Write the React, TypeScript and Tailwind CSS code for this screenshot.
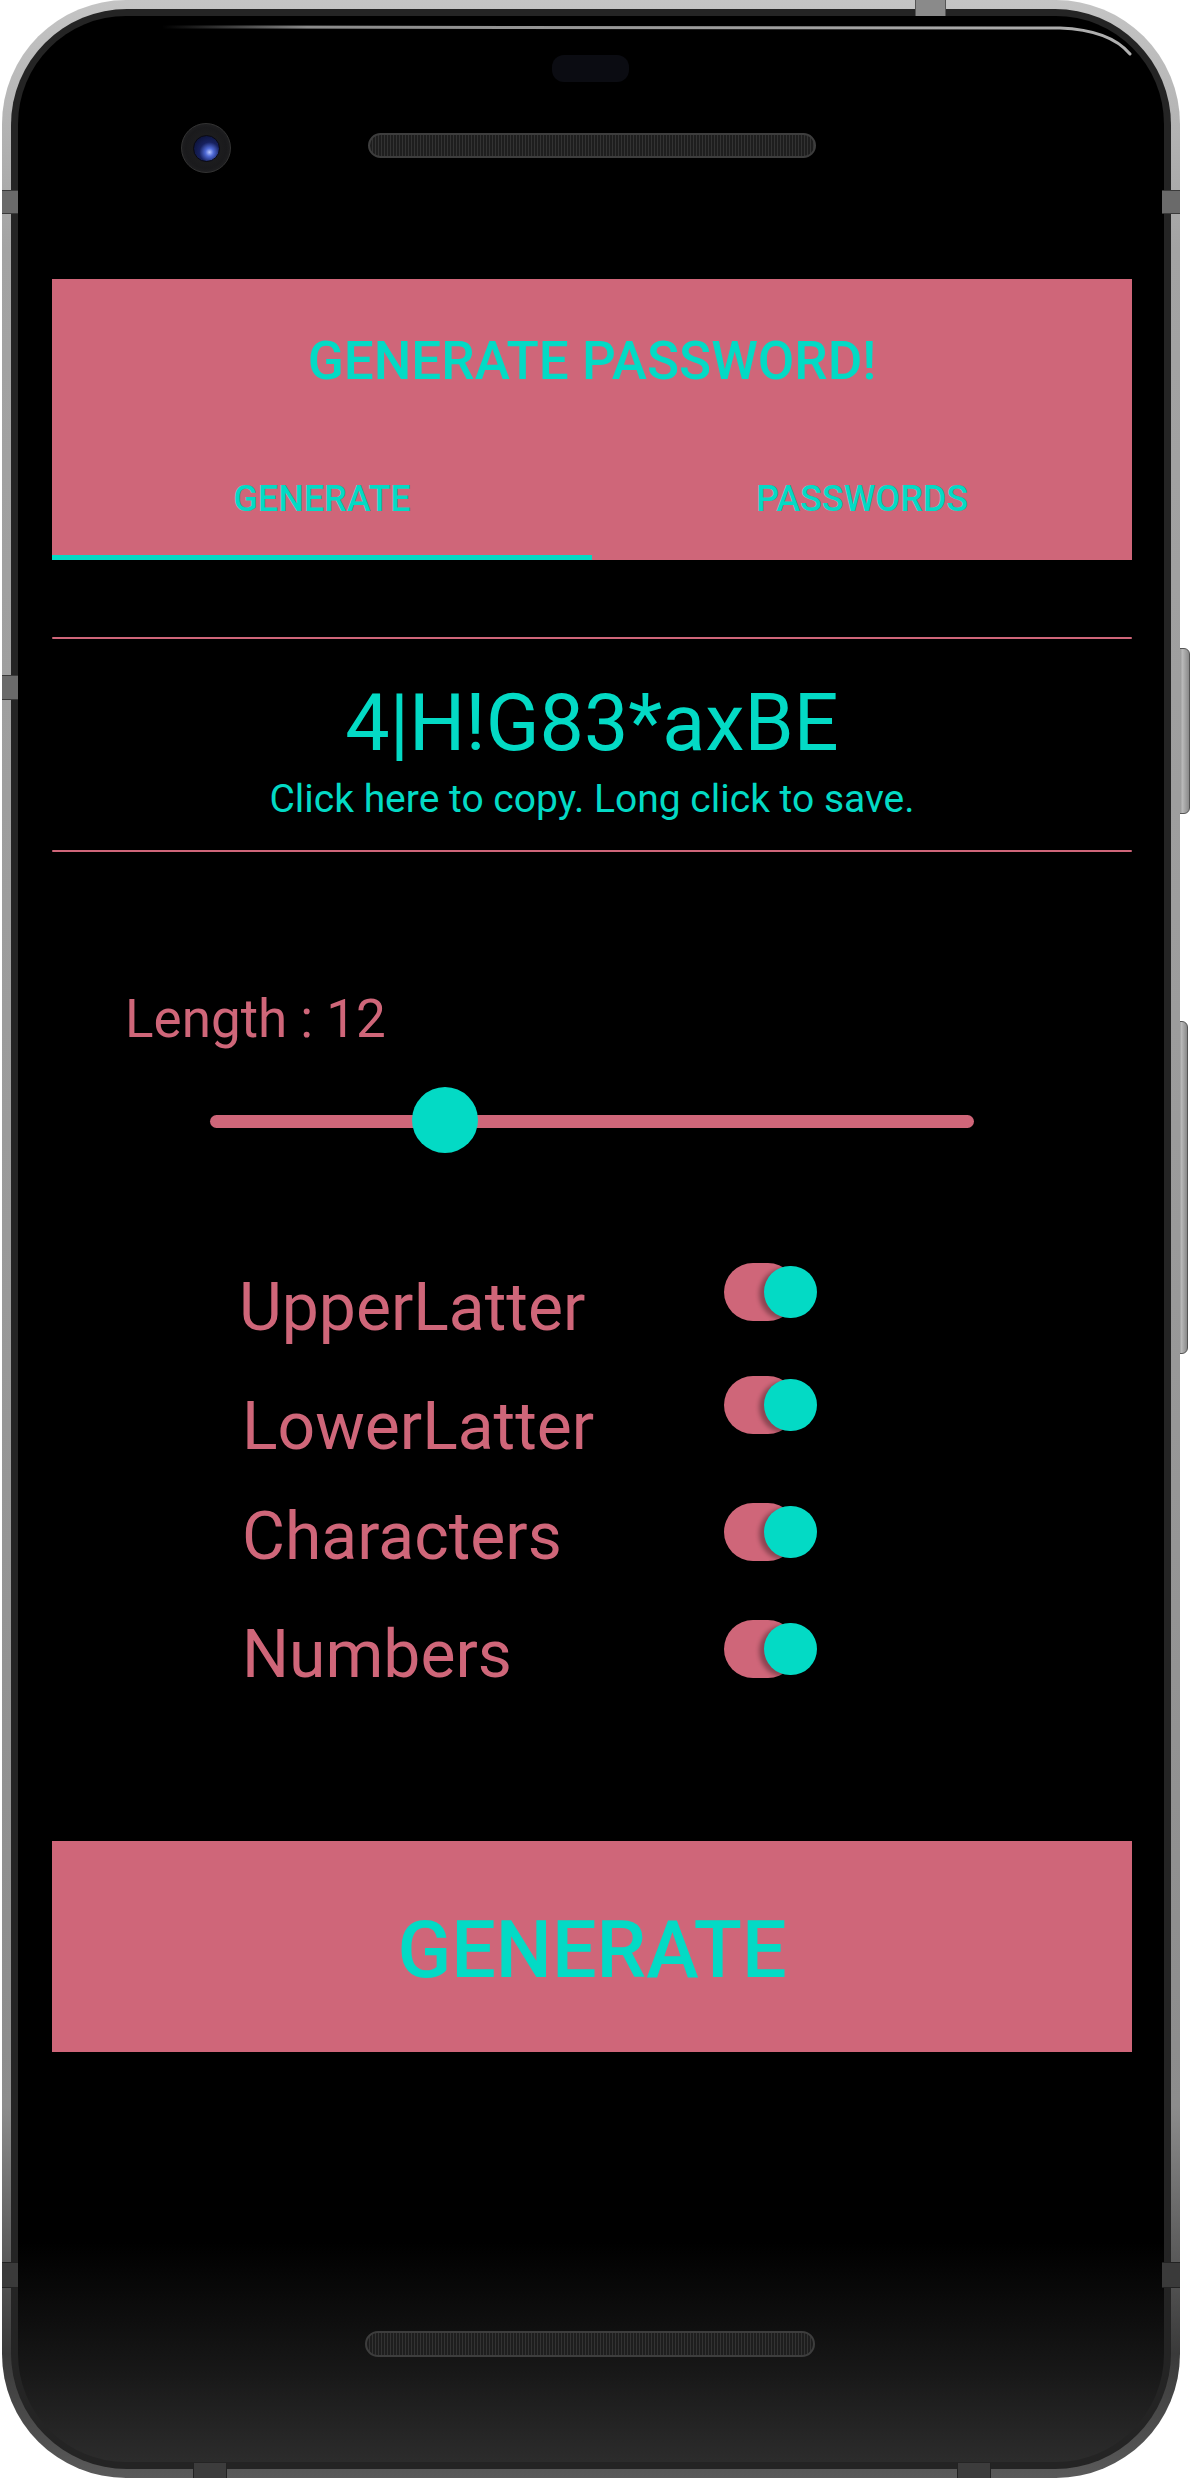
import React from "react";

const PINK = "bg-[#CF6679]";

function Toggle() {
  return (
    <div className="relative w-[93px] h-[58px] shrink-0">
      <div className="w-[73px] h-[58px] rounded-full bg-[#CF6679]" />
      <div className="absolute left-[40px] top-[3px] w-[53px] h-[52px] rounded-full bg-[#03DAC5] shadow-[-5px_2px_4px_rgba(0,0,0,0.32)]" />
    </div>
  );
}

const rows = [
  { label: "UpperLatter", row: "h-[113px]", lab: "pt-[12px] pl-[187px]" },
  { label: "LowerLatter", row: "h-[127px]", lab: "pt-[18px] pl-[190px]" },
  { label: "Characters", row: "h-[117px]", lab: "pt-[1px] pl-[190px]" },
  { label: "Numbers", row: "h-[58px]", lab: "pt-[2px] pl-[190px]" },
];

export default function App() {
  return (
    <div className="relative w-[1194px] h-[2480px] bg-white overflow-hidden font-[Roboto,sans-serif]">
      {/* side buttons */}
      <div className="absolute left-[1176px] top-[648px] w-[14px] h-[166px] rounded-r-[6px] bg-[linear-gradient(90deg,#6e6e6e,#b9b9b9_45%,#8a8a8a)] border border-[#555]" />
      <div className="absolute left-[1176px] top-[1021px] w-[12px] h-[333px] rounded-r-[6px] bg-[linear-gradient(90deg,#6e6e6e,#b9b9b9_45%,#8a8a8a)] border border-[#555]" />

      {/* phone body */}
      <div className="absolute left-[2px] top-0 w-[1178px] h-[2478px] rounded-[124px] bg-[linear-gradient(180deg,#c4c4c4_0%,#a3a3a3_10%,#9a9a9a_50%,#8c8c8c_85%,#3a3a3a_95%,#5a5a5a_100%)] p-[9px]">
        <div className="w-full h-full rounded-[116px] bg-[#242424] p-[7px]">
          <div className="relative w-full h-full rounded-[108px] overflow-hidden bg-[linear-gradient(180deg,#000_0%,#000_91%,#161616_96%,#2c2c2c_100%)]">
            {/* top bezel */}
            <div className="h-[263px]">
              <div className="ml-[534px] pt-[39px]">
                <div className="w-[77px] h-[27px] rounded-[12px] bg-[#0b0c12]" />
              </div>
              <div className="flex items-center mt-[41px] ml-[163px]">
                <div className="w-[50px] h-[50px] rounded-full bg-[radial-gradient(circle,#222_0%,#1a1a1c_60%,#2a2a2c_100%)] border border-[#333] flex items-center justify-center">
                  <div className="w-[27px] h-[27px] rounded-full bg-[radial-gradient(circle_at_62%_65%,#b8c6ff_0%,#4f6ad6_18%,#17215e_45%,#070b22_100%)] border border-[#0a0a12]" />
                </div>
                <div className="ml-[137px] -mt-[6px] w-[448px] h-[25px] rounded-full border-2 border-[#3d3d3d] bg-[repeating-linear-gradient(90deg,#1e1e1e_0px,#1e1e1e_2px,#333_2px,#333_3px)]" />
              </div>
            </div>

            {/* app content */}
            <div className="ml-[34px] w-[1080px]">
              {/* header */}
              <div className={`${PINK} h-[281px] flex flex-col`}>
                <div className="h-[158px] pt-[6px] flex items-center justify-center">
                  <span className="text-[#03DAC5] text-[53px] leading-[53px] font-medium">GENERATE PASSWORD!</span>
                </div>
                <div className="h-[123px] flex">
                  <div className="flex-1 flex flex-col">
                    <div className="flex-1 pt-[5px] flex items-center justify-center">
                      <span className="text-[#03DAC5] text-[36px] leading-[36px] font-medium">GENERATE</span>
                    </div>
                    <div className="h-[5px] bg-[#03DAC5]" />
                  </div>
                  <div className="flex-1 flex flex-col">
                    <div className="flex-1 pt-[5px] flex items-center justify-center">
                      <span className="text-[#03DAC5] text-[36px] leading-[36px] font-medium">PASSWORDS</span>
                    </div>
                    <div className="h-[5px]" />
                  </div>
                </div>
              </div>

              {/* password box */}
              <div className="mt-[77px] h-[2px] rounded-full bg-[#CF6679]" />
              <div className="flex flex-col items-center">
                <div className="mt-[45px] text-[#03DAC5] text-[79px] leading-[79px]">4|H!G83*axBE</div>
                <div className="mt-[17px] text-[#03DAC5] text-[39px] leading-[39px]">Click here to copy. Long click to save.</div>
              </div>
              <div className="mt-[31px] h-[2px] rounded-full bg-[#CF6679]" />

              {/* length */}
              <div className="mt-[141px] ml-[73px] text-[#CF6679] text-[53px] leading-[53px]">Length : 12</div>
              <div className="relative mt-[42px] ml-[158px] w-[764px] h-[66px] flex items-center">
                <div className="w-full h-[13px] rounded-full bg-[#CF6679]" />
                <div className="absolute left-[202px] -top-[1px] w-[66px] h-[66px] rounded-full bg-[#03DAC5]" />
              </div>

              {/* toggles */}
              <div className="mt-[109px] flex flex-col">
                {rows.map((r) => (
                  <div key={r.label} className={`flex items-start ${r.row}`}>
                    <div className={`w-[672px] ${r.lab}`}>
                      <span className="text-[#CF6679] text-[66px] leading-[66px]">{r.label}</span>
                    </div>
                    <Toggle />
                  </div>
                ))}
              </div>

              {/* generate button */}
              <div className={`mt-[163px] h-[211px] ${PINK} flex items-center justify-center pt-[8px]`}>
                <span className="text-[#03DAC5] text-[79px] leading-[79px] font-medium">GENERATE</span>
              </div>

              {/* bottom speaker */}
              <div className="mt-[279px] ml-[313px] w-[450px] h-[26px] rounded-full border-2 border-[#3d3d3d] bg-[repeating-linear-gradient(90deg,#1e1e1e_0px,#1e1e1e_2px,#333_2px,#333_3px)]" />
            </div>
          </div>
        </div>
      </div>

      {/* rim bands */}
      <div className="absolute left-[2px] top-[190px] w-[16px] h-[24px] bg-[#6a6a6a] border-y border-[#3a3a3a]" />
      <div className="absolute left-[2px] top-[675px] w-[16px] h-[25px] bg-[#6a6a6a] border-y border-[#3a3a3a]" />
      <div className="absolute left-[1162px] top-[190px] w-[18px] h-[24px] bg-[#6a6a6a] border-y border-[#3a3a3a]" />
      <div className="absolute left-[1162px] top-[2262px] w-[18px] h-[26px] bg-[#3a3a3a] border-y border-[#222]" />
      <div className="absolute left-[2px] top-[2262px] w-[16px] h-[26px] bg-[#3a3a3a] border-y border-[#222]" />
      <div className="absolute left-[193px] top-[2463px] w-[34px] h-[15px] bg-[#3c3c3c] border-x border-[#222]" />
      <div className="absolute left-[957px] top-[2463px] w-[34px] h-[15px] bg-[#3c3c3c] border-x border-[#222]" />
      <div className="absolute left-[915px] top-0 w-[31px] h-[16px] bg-[#8a8a8a] border-x border-[#555]" />

      {/* glass reflection */}
      <svg className="absolute left-0 top-0 pointer-events-none" width="1194" height="80" viewBox="0 0 1194 80">
        <defs>
          <linearGradient id="refl" x1="0" x2="1" y1="0" y2="0">
            <stop offset="0" stopColor="#888" stopOpacity="0" />
            <stop offset="0.15" stopColor="#9a9a9a" stopOpacity="0.9" />
            <stop offset="1" stopColor="#b0b0b0" stopOpacity="1" />
          </linearGradient>
        </defs>
        <path d="M162 27 L1060 28 Q1110 30 1130 54" stroke="url(#refl)" strokeWidth="3" fill="none" strokeLinecap="round" />
      </svg>
    </div>
  );
}
